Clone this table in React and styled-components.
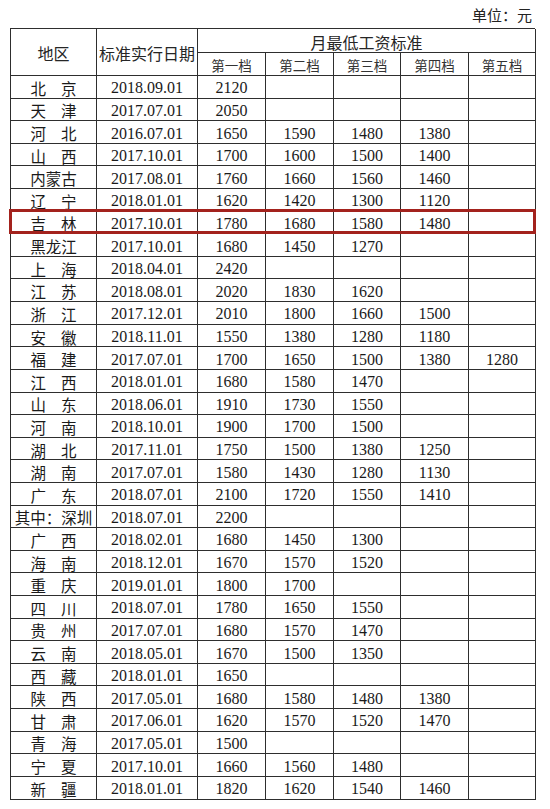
import React from 'react';
import styled, { createGlobalStyle } from 'styled-components';

const GlobalStyle = createGlobalStyle`
  html, body {
    margin: 0;
    padding: 0;
    background: #ffffff;
  }
  body {
    font-family: 'Noto Sans CJK SC', 'Noto Sans', sans-serif;
    color: #1c1c1c;
  }
`;

const ROW = 22.62;
const HEAD_1 = 24;
const HEAD_2 = 23;

const Page = styled.div`
  width: 550px;
  height: 809px;
  overflow: hidden;
`;

const Caption = styled.div`
  height: 28px;
  display: flex;
  justify-content: flex-end;
  align-items: center;
  padding-right: 18px;
  box-sizing: border-box;
  font-size: 15px;
  color: #222;
`;

const TableWrap = styled.div`
  position: relative;
  margin-left: 10px;
  width: 525px;
`;

const Grid = styled.div`
  display: grid;
  grid-template-columns: 86px 101px 68px 68px 67px 68px 67px;
  grid-template-rows: ${HEAD_1}px ${HEAD_2}px repeat(32, ${ROW}px);
  border-top: 1.5px solid #2e2e2e;
  border-left: 1.5px solid #2e2e2e;
`;

const Cell = styled.div`
  box-sizing: border-box;
  border-right: 1.5px solid #2e2e2e;
  border-bottom: 1.5px solid #2e2e2e;
  display: flex;
  align-items: center;
  justify-content: center;
  white-space: nowrap;
  overflow: hidden;
  grid-row: ${({ $rows }) => $rows || 'auto'};
  grid-column: ${({ $cols }) => $cols || 'auto'};
`;

const HeadText = styled.span`
  font-size: 16px;
  color: #262626;
  padding-top: ${({ $pt }) => $pt || 0}px;
`;

const TierText = styled.span`
  font-family: 'Noto Sans CJK SC', sans-serif;
  font-size: 13.5px;
  color: #333;
  padding-top: 2px;
`;

const Region = styled.span`
  display: flex;
  gap: ${({ $gap }) => $gap}px;
  font-size: 15.5px;
  color: #1a1a1a;
  padding-top: 2px;
`;

const Num = styled.span`
  font-family: 'Liberation Serif', 'Times New Roman', serif;
  font-size: 16px;
  color: #1a1a1a;
  padding-top: 3px;
`;

const Highlight = styled.div`
  position: absolute;
  left: -1px;
  top: ${({ $top }) => $top}px;
  width: 527px;
  height: 25px;
  box-sizing: border-box;
  border: 3px solid #a3221d;
  pointer-events: none;
`;

const rows = [
  ['北京', '2018.09.01', '2120'],
  ['天津', '2017.07.01', '2050'],
  ['河北', '2016.07.01', '1650', '1590', '1480', '1380'],
  ['山西', '2017.10.01', '1700', '1600', '1500', '1400'],
  ['内蒙古', '2017.08.01', '1760', '1660', '1560', '1460'],
  ['辽宁', '2018.01.01', '1620', '1420', '1300', '1120'],
  ['吉林', '2017.10.01', '1780', '1680', '1580', '1480'],
  ['黑龙江', '2017.10.01', '1680', '1450', '1270'],
  ['上海', '2018.04.01', '2420'],
  ['江苏', '2018.08.01', '2020', '1830', '1620'],
  ['浙江', '2017.12.01', '2010', '1800', '1660', '1500'],
  ['安徽', '2018.11.01', '1550', '1380', '1280', '1180'],
  ['福建', '2017.07.01', '1700', '1650', '1500', '1380', '1280'],
  ['江西', '2018.01.01', '1680', '1580', '1470'],
  ['山东', '2018.06.01', '1910', '1730', '1550'],
  ['河南', '2018.10.01', '1900', '1700', '1500'],
  ['湖北', '2017.11.01', '1750', '1500', '1380', '1250'],
  ['湖南', '2017.07.01', '1580', '1430', '1280', '1130'],
  ['广东', '2018.07.01', '2100', '1720', '1550', '1410'],
  ['其中：深圳', '2018.07.01', '2200'],
  ['广西', '2018.02.01', '1680', '1450', '1300'],
  ['海南', '2018.12.01', '1670', '1570', '1520'],
  ['重庆', '2019.01.01', '1800', '1700'],
  ['四川', '2018.07.01', '1780', '1650', '1550'],
  ['贵州', '2017.07.01', '1680', '1570', '1470'],
  ['云南', '2018.05.01', '1670', '1500', '1350'],
  ['西藏', '2018.01.01', '1650'],
  ['陕西', '2017.05.01', '1680', '1580', '1480', '1380'],
  ['甘肃', '2017.06.01', '1620', '1570', '1520', '1470'],
  ['青海', '2017.05.01', '1500'],
  ['宁夏', '2017.10.01', '1660', '1560', '1480'],
  ['新疆', '2018.01.01', '1820', '1620', '1540', '1460'],
];

const tiers = ['第一档', '第二档', '第三档', '第四档', '第五档'];

const RegionName = ({ name }) => {
  const chars = Array.from(name);
  const gap = chars.length === 2 ? 15 : 0;
  return (
    <Region $gap={gap}>
      {chars.map((c, i) => <span key={i}>{c}</span>)}
    </Region>
  );
};

const App = () => {
  const highlightTop = HEAD_1 + HEAD_2 + 6 * ROW - 1.5;

  return (
    <Page>
      <GlobalStyle />
      <Caption>单位：元</Caption>
      <TableWrap>
        <Grid>
          <Cell $rows="1 / 3" $cols="1"><HeadText $pt={2}>地区</HeadText></Cell>
          <Cell $rows="1 / 3" $cols="2"><HeadText $pt={2}>标准实行日期</HeadText></Cell>
          <Cell $rows="1" $cols="3 / 8"><HeadText $pt={2}>月最低工资标准</HeadText></Cell>
          {tiers.map((t) => (
            <Cell key={t} $rows="2"><TierText>{t}</TierText></Cell>
          ))}
          {rows.map(([name, date, ...vals]) => (
            <React.Fragment key={name}>
              <Cell><RegionName name={name} /></Cell>
              <Cell><Num>{date}</Num></Cell>
              {[0, 1, 2, 3, 4].map((i) => (
                <Cell key={i}>{vals[i] && <Num>{vals[i]}</Num>}</Cell>
              ))}
            </React.Fragment>
          ))}
        </Grid>
        <Highlight $top={highlightTop} />
      </TableWrap>
    </Page>
  );
};

export default App;
